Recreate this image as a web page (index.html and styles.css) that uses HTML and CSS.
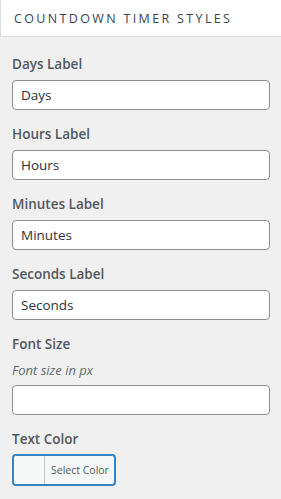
FILE: index.html
```html
<!DOCTYPE html>
<html>
<head>
<meta charset="utf-8">
<link rel="stylesheet" href="styles.css">
</head>
<body>
<div class="panel">
  <div class="section-title">Countdown Timer Styles</div>
  <div class="controls">
    <div class="control">
      <label class="control-title">Days Label</label>
      <input class="text-input" type="text" value="Days">
    </div>
    <div class="control">
      <label class="control-title">Hours Label</label>
      <input class="text-input" type="text" value="Hours">
    </div>
    <div class="control">
      <label class="control-title">Minutes Label</label>
      <input class="text-input" type="text" value="Minutes">
    </div>
    <div class="control">
      <label class="control-title">Seconds Label</label>
      <input class="text-input" type="text" value="Seconds">
    </div>
    <div class="control">
      <label class="control-title">Font Size</label>
      <span class="description">Font size in px</span>
      <input class="text-input" type="text" value="">
    </div>
    <div class="control">
      <label class="control-title">Text Color</label>
      <button class="color-button" type="button">
        <span class="swatch"></span>
        <span class="color-text">Select Color</span>
      </button>
    </div>
  </div>
</div>
</body>
</html>
```

FILE: styles.css
```css
html, body {
  margin: 0;
  padding: 0;
  background: #f0f0f1;
}
body {
  font-family: "Open Sans", "Noto Sans", "Liberation Sans", sans-serif;
  color: #50575e;
  width: 281px;
  height: 499px;
  overflow: hidden;
}
.section-title {
  height: 37px;
  box-sizing: border-box;
  background: #fff;
  border-left: 1px solid #dcdcde;
  border-bottom: 1px solid #dcdcde;
  padding: 9px 0 0 13px;
  font-size: 12.5px;
  line-height: 20px;
  letter-spacing: 2.35px;
  text-transform: uppercase;
  color: #3c434a;
}
.controls {
  padding: 15px 11px 0 12px;
}
.control {
  display: flex;
  flex-direction: column;
  margin-bottom: 12px;
}
.control-title {
  font-size: 13.5px;
  font-weight: 600;
  line-height: 24px;
  margin-bottom: 4px;
  color: #50575e;
}
.description {
  font-size: 13px;
  font-style: italic;
  line-height: 20px;
  margin-bottom: 5px;
  color: #646970;
}
.text-input {
  box-sizing: border-box;
  height: 30px;
  width: 258px;
  margin: 0;
  border: 1px solid #8c8f94;
  border-radius: 4px;
  background: #fff;
  padding: 0 8px;
  font-family: inherit;
  font-size: 13.5px;
  color: #2c3338;
  outline: none;
}
.color-button {
  box-sizing: border-box;
  width: 104px;
  height: 32px;
  margin: -1px 0 0;
  padding: 0;
  display: flex;
  align-items: stretch;
  border: 2px solid #3582c4;
  border-radius: 4px;
  background: #f6f7f7;
  font-family: inherit;
  overflow: hidden;
}
.swatch {
  width: 30px;
  border-right: 1px solid #c3c4c7;
  background: #f6f7f7;
}
.color-text {
  display: flex;
  align-items: center;
  padding-left: 6px;
  font-size: 10.5px;
  color: #50575e;
}
```
